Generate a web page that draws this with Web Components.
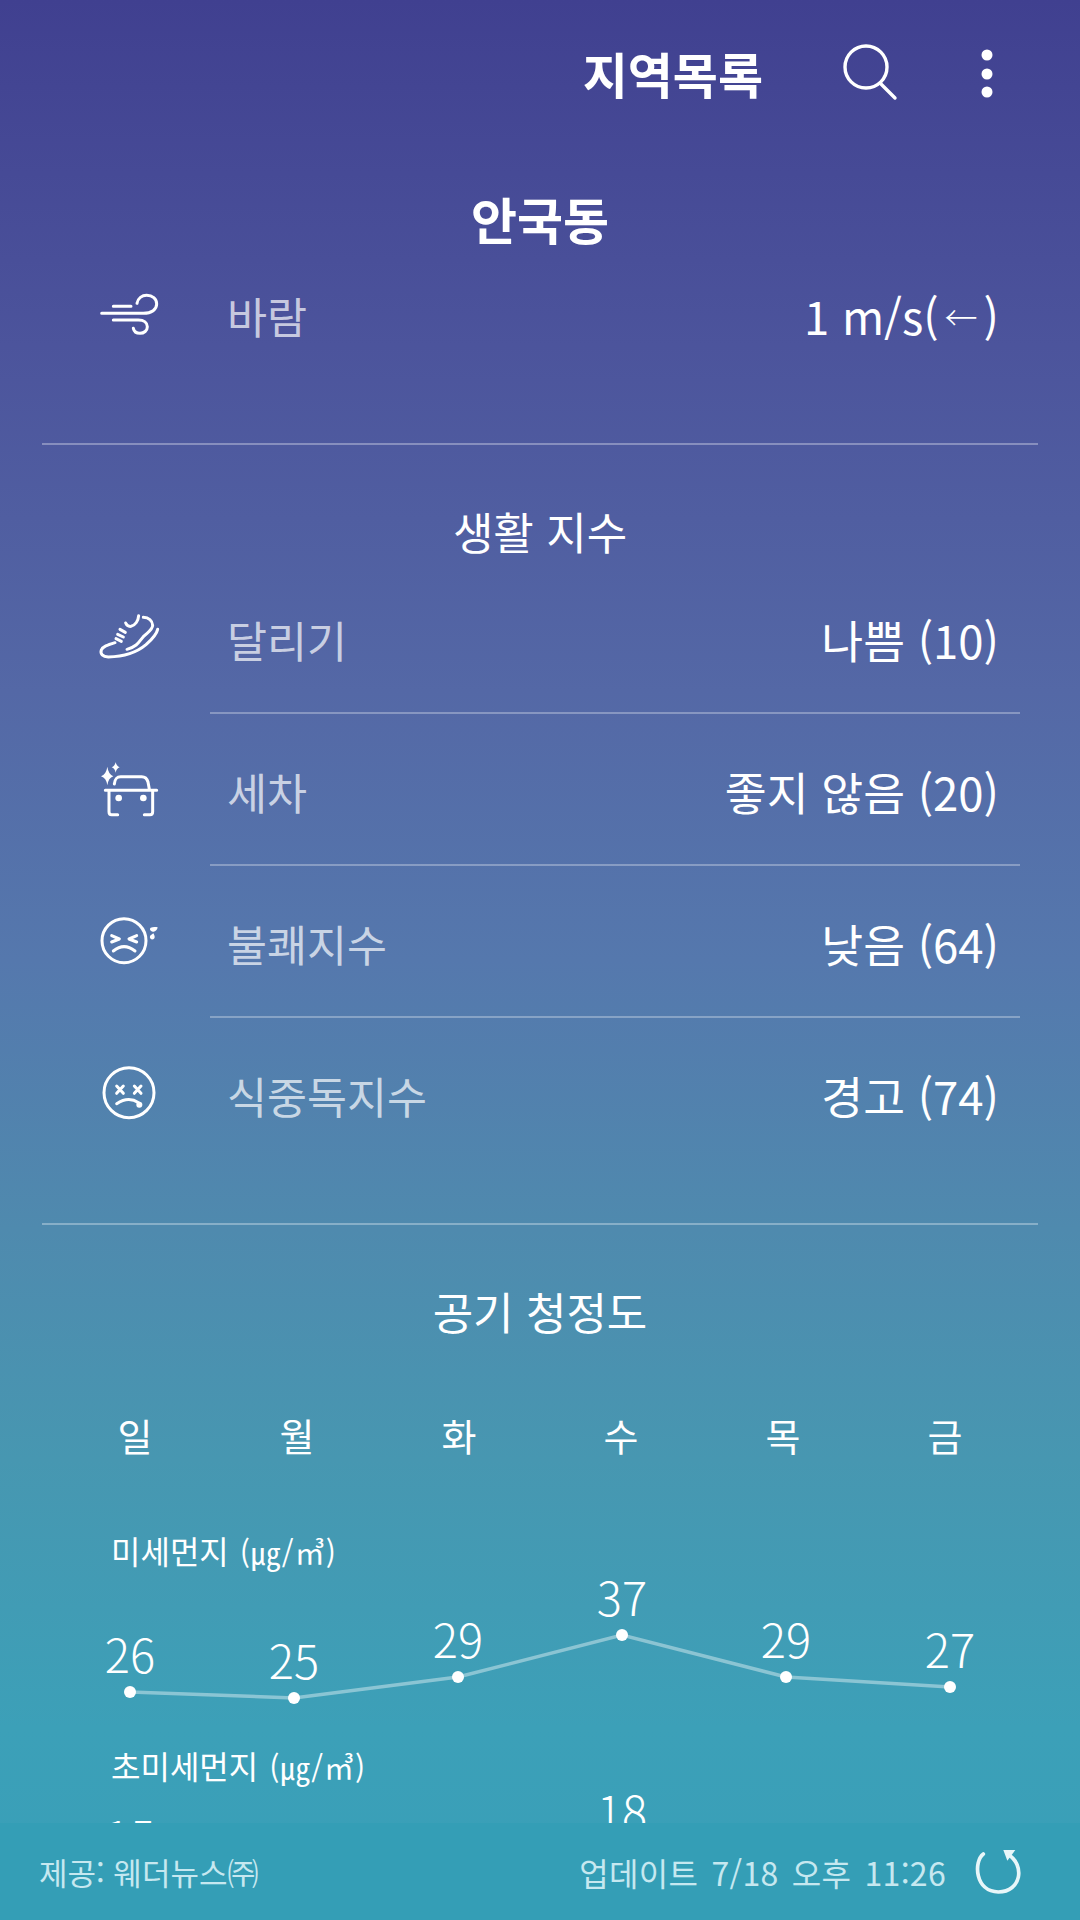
<!DOCTYPE html>
<html lang="ko">
<head>
<meta charset="utf-8">
<title>안국동</title>
<style>
  html, body { margin: 0; padding: 0; }
  body { font-family: "Noto Sans CJK KR", "Noto Sans", sans-serif; }
</style>
</head>
<body>
<weather-app>
  <app-bar title-text="지역목록"></app-bar>
  <div>
    <city-name>안국동</city-name>
    <info-row icon="wind" label="바람" value="1 m/s(←)"></info-row>
    <section-rule></section-rule>
    <section-title>생활 지수</section-title>
    <info-row icon="shoe" label="달리기" value="나쁨 (10)" lined></info-row>
    <info-row icon="car" label="세차" value="좋지 않음 (20)" lined></info-row>
    <info-row icon="sweat" label="불쾌지수" value="낮음 (64)" lined></info-row>
    <info-row icon="dizzy" label="식중독지수" value="경고 (74)"></info-row>
    <section-rule></section-rule>
    <section-title>공기 청정도</section-title>
    <day-row days="일,월,화,수,목,금"></day-row>
    <air-chart label="미세먼지" values="26,25,29,37,29,27" points="1691,1697,1676,1634,1676,1686" top="1587"></air-chart>
    <air-chart label="초미세먼지" values="15,,,18,," points="1873,,,1848,," top="1802"></air-chart>
  </div>
  <app-footer slot="footer"></app-footer>
</weather-app>

<script>
const ICONS = {
  // viewBoxes are in the coordinates of the reference crops, 3 units to a pixel
  wind: `<svg viewBox="90 12 252 252"><path d="M125 130H250C275 130 290 118 290 102C290 86 277 76 260 76C246 76 234 85 231 100M160 109H213M160 150H235C252 150 262 158 262 170C262 182 252 190 240 190C230 190 222 184 220 175"/></svg>`,
  shoe: `<svg viewBox="90 54 252 252"><path d="M236 107C235 122 226 136 213 139C205 140 200 136 197 129M250 112C266 113 277 122 278 136C278 150 262 158 250 170C238 184 232 200 201 208M293 148C290 162 276 178 258 194C232 216 190 230 145 231C128 230 120 222 124 210C128 200 142 195 165 188M180 148L196 157M173 163L190 171M168 176L184 184"/></svg>`,
  car: `<svg viewBox="90 510 252 252"><path d="M136 631H290M163 612C165 596 170 590 182 590H245C256 590 261 595 264 606L268 628M147 631V695C147 701 149 704 155 704H173M278 631V695C278 701 276 704 270 704H253"/><circle class="f" cx="176" cy="654" r="10"/><circle class="f" cx="250" cy="654" r="10"/><path class="f" d="M142 560Q145 582 160 589Q145 594 142 616Q139 594 123 589Q139 582 142 560Z"/><path class="f" d="M167 546Q169 558 179 562Q169 566 167 578Q165 566 155 562Q165 558 167 546Z"/></svg>`,
  sweat: `<svg viewBox="90 66 252 252"><circle cx="192" cy="182" r="66"/><path d="M155 167L178 177L155 186M230 167L207 177L230 186M160 213Q192 187 225 213"/><path class="f" d="M293 142C292 150 286 156 279 155C270 153 268 147 272 143C278 141 285 141 293 142Z"/><path class="f" d="M280 160C285 168 286 175 280 178C274 180 268 175 270 169C272 165 276 163 280 160Z"/></svg>`,
  dizzy: `<svg viewBox="90 522 252 252"><circle cx="207" cy="638" r="75"/><path d="M170 618L190 640M190 618L170 640M223 618L243 640M243 618L223 640M170 671Q205 648 236 668"/><circle class="f" cx="238" cy="674" r="9"/></svg>`
}

customElements.define('weather-app', class extends HTMLElement {
  constructor() {
    super()
    this.attachShadow({ mode: 'open' }).innerHTML = `
    <style>
    :host {
      display: flex;
      flex-direction: column;
      width: 1080px;
      height: 1920px;
      overflow: hidden;
      color: #fff;
      font-family: "Noto Sans CJK KR", "Noto Sans", sans-serif;
      background: linear-gradient(180deg, #404090 0%, #4c549c 18%, #5468a6 36%, #5578ad 50%, #4f8aae 64%, #4797b1 76%, #3ca0b8 90%, #389fb8 100%);
    }
    .scroll {
      flex: 1;
      min-height: 0;
      overflow: hidden;
    }
    </style>
    <slot name="bar"></slot>
    <div class="scroll"><slot></slot></div>
    <slot name="footer"></slot>
    `
    // the bar is the first light child, it stays out of the scrolling part
    this.querySelector('app-bar').slot = 'bar'
  }
})

customElements.define('app-bar', class extends HTMLElement {
  constructor() {
    super()
    this.attachShadow({ mode: 'open' }).innerHTML = `
    <style>
    :host {
      display: flex;
      align-items: center;
      justify-content: flex-end;
      height: 150px;
      padding-right: 87px;
    }
    .title {
      font-size: 49px;
      font-weight: 700;
      line-height: 60px;
      margin-top: -4px;
    }
    svg { display: block; fill: none; stroke: #fff; stroke-width: 3.4; stroke-linecap: round; }
    .search { width: 64px; height: 64px; margin-left: 76px; }
    .more { width: 12px; height: 50px; margin: -2px 0 0 78px; fill: #fff; stroke: none; }
    </style>
    <span class="title">${this.getAttribute('title-text')}</span>
    <svg class="search" viewBox="0 0 64 64"><circle cx="27" cy="24" r="21"/><path d="M42 41L56 55"/></svg>
    <svg class="more" viewBox="0 0 12 50"><circle cx="6" cy="6" r="5.5"/><circle cx="6" cy="25" r="5.5"/><circle cx="6" cy="43" r="5.5"/></svg>
    `
  }
})

customElements.define('city-name', class extends HTMLElement {
  constructor() {
    super()
    this.attachShadow({ mode: 'open' }).innerHTML = `
    <style>
    :host {
      display: block;
      height: 87px;
      line-height: 136px;
      font-size: 50px;
      font-weight: 700;
      text-align: center;
    }
    </style>
    <slot></slot>
    `
  }
})

customElements.define('info-row', class extends HTMLElement {
  constructor() {
    super()
    const value = this.getAttribute('value').replace('←', '<span class="arrow">←</span>')
    this.attachShadow({ mode: 'open' }).innerHTML = `
    <style>
    :host {
      display: flex;
      align-items: center;
      box-sizing: border-box;
      height: 152px;
      padding: 4px 0 0 90px;
      position: relative;
    }
    svg {
      display: block;
      width: 84px;
      height: 84px;
      margin-top: 2px;
      fill: none;
      stroke: #fff;
      stroke-width: 9;
      stroke-linecap: round;
      stroke-linejoin: round;
    }
    svg .f { fill: #fff; stroke: none; }
    .wrap { display: contents; }
    .label {
      margin-left: 53px;
      flex: 1;
      font-size: 43.5px;
      color: rgba(255, 255, 255, .7);
    }
    .value {
      margin-right: 81px;
      font-size: 45.5px;
      color: #fff;
    }
    .arrow { font-size: 33px; font-weight: 300; vertical-align: 5px; margin: 0 6px; }
    :host([lined])::after {
      content: "";
      position: absolute;
      left: 210px;
      right: 60px;
      bottom: -1px;
      height: 2px;
      background: rgba(255, 255, 255, .3);
    }
    </style>
    <span class="wrap">${ICONS[this.getAttribute('icon')]}</span>
    <span class="label">${this.getAttribute('label')}</span>
    <span class="value">${value}</span>
    `
  }
})

customElements.define('section-rule', class extends HTMLElement {
  constructor() {
    super()
    this.attachShadow({ mode: 'open' }).innerHTML = `
    <style>
    :host {
      display: block;
      height: 2px;
      margin: 54px 42px 0;
      background: rgba(255, 255, 255, .32);
    }
    </style>
    `
  }
})

customElements.define('section-title', class extends HTMLElement {
  constructor() {
    super()
    this.attachShadow({ mode: 'open' }).innerHTML = `
    <style>
    :host {
      display: block;
      height: 116px;
      line-height: 172px;
      font-size: 44px;
      text-align: center;
    }
    </style>
    <slot></slot>
    `
  }
})

customElements.define('day-row', class extends HTMLElement {
  constructor() {
    super()
    const days = this.getAttribute('days').split(',').map(d => `<span>${d}</span>`).join('')
    this.attachShadow({ mode: 'open' }).innerHTML = `
    <style>
    :host {
      display: grid;
      grid-template-columns: repeat(6, 162px);
      align-content: start;
      padding-left: 54px;
      padding-top: 64px;
      height: 195px;
      box-sizing: border-box;
      line-height: 60px;
      font-size: 38px;
      text-align: center;
    }
    </style>
    ${days}
    `
  }
})

customElements.define('air-chart', class extends HTMLElement {
  constructor() {
    super()
    const top = +this.getAttribute('top')
    const ys = this.getAttribute('points').split(',')
    const pts = this.getAttribute('values').split(',')
      .map((v, i) => ({ v, x: 130 + i * 164, y: ys[i] - top }))
      .filter(p => p.v)
    const line = pts.map(p => `${p.x},${p.y}`).join(' ')
    const dots = pts.map(p => `<circle cx="${p.x}" cy="${p.y}" r="6"/>`).join('')
    const nums = pts.map(p => `<text x="${p.x}" y="${p.y - 19}">${p.v}</text>`).join('')
    this.attachShadow({ mode: 'open' }).innerHTML = `
    <style>
    :host {
      display: block;
      height: 215px;
    }
    .label {
      display: block;
      height: 36px;
      line-height: 28px;
      padding-left: 111px;
      font-size: 32px;
      white-space: nowrap;
    }
    .unit { font-size: 30px; letter-spacing: 1px; margin-left: 2px; }
    svg { display: block; width: 1080px; height: 179px; overflow: visible; }
    polyline { fill: none; stroke: rgba(255, 255, 255, .4); stroke-width: 3.5; }
    circle { fill: #fff; }
    text { fill: #fff; font-size: 47px; font-weight: 300; text-anchor: middle; font-family: "Noto Sans CJK KR", "Noto Sans", sans-serif; }
    </style>
    <span class="label">${this.getAttribute('label')} <span class="unit">(㎍/㎥)</span></span>
    <svg viewBox="0 -16 1080 179"><polyline points="${line}"/>${dots}${nums}</svg>
    `
  }
})

customElements.define('app-footer', class extends HTMLElement {
  constructor() {
    super()
    this.attachShadow({ mode: 'open' }).innerHTML = `
    <style>
    :host {
      display: flex;
      align-items: center;
      height: 97px;
      padding: 0 52px 0 39px;
      font-size: 32px;
      color: #c6e8f0;
      background: #349eb6;
    }
    .by { flex: 1; font-size: 31px; }
    .updated { word-spacing: 4px; letter-spacing: .3px; }
    svg { display: block; width: 60px; height: 60px; margin-left: 22px; fill: none; stroke: #e8f6f9; stroke-width: 11; stroke-linecap: round; }
    svg .f { fill: #e8f6f9; stroke: none; }
    </style>
    <span class="by">제공: 웨더뉴스㈜</span>
    <span class="updated">업데이트 7/18 오후 11:26</span>
    <svg viewBox="1224 186 180 180"><path d="M1270 222C1240 245 1245 335 1315 336C1385 335 1395 255 1345 224"/><path class="f" d="M1330 210L1366 210L1342 242Z"/></svg>
    `
  }
})
</script>
</body>
</html>
